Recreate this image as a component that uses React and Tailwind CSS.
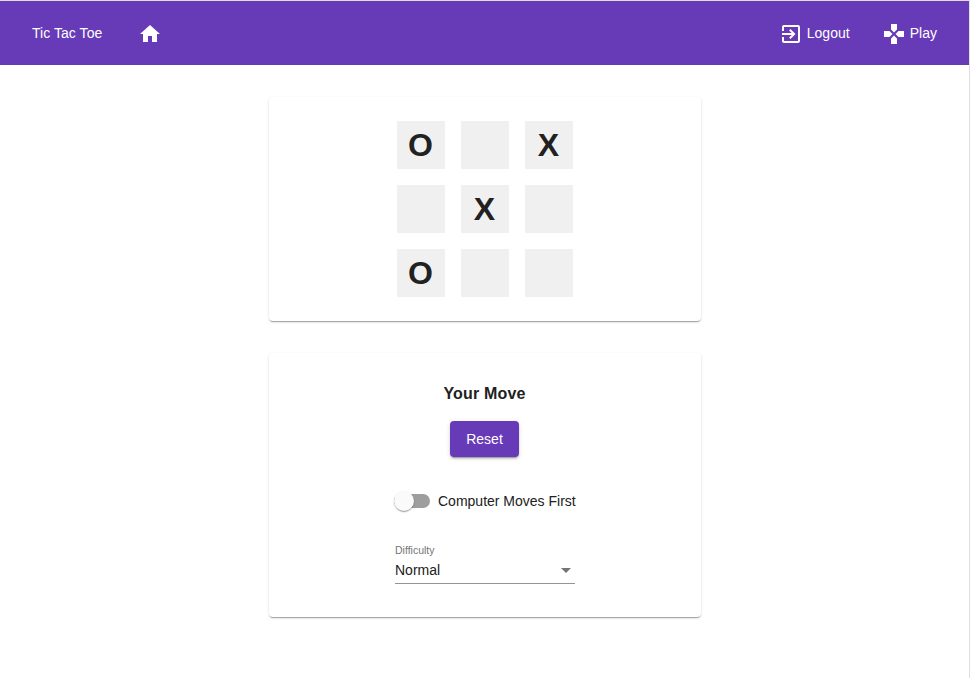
import React from "react";

const CELLS = ["O", "", "X", "", "X", "", "O", "", ""];

const HOME = "M10 20v-6h4v6h5v-8h3L12 3 2 12h3v8z";
const EXIT =
  "M10.09 15.59L11.5 17l5-5-5-5-1.41 1.41L12.67 11H3v2h9.67l-2.58 2.59zM19 3H5c-1.11 0-2 .9-2 2v4h2V5h14v14H5v-4H3v4c0 1.1.89 2 2 2h14c1.1 0 2-.9 2-2V5c0-1.1-.9-2-2-2z";
const GAMEPAD =
  "M15 7.5V2H9v5.5l3 3 3-3zM7.5 9H2v6h5.5l3-3-3-3zM9 16.5V22h6v-5.5l-3-3-3 3zM16.5 9l-3 3 3 3H22V9h-5.5z";

function Icon({ path }) {
  return (
    <svg viewBox="0 0 24 24" className="mt-0.5 size-6 shrink-0 fill-white">
      <path d={path} />
    </svg>
  );
}

function Card({ className, children }) {
  return (
    <section
      className={`flex w-[432px] flex-col items-center rounded bg-white shadow-[0_2px_1px_-1px_rgba(0,0,0,0.2),0_1px_1px_0_rgba(0,0,0,0.14),0_1px_3px_0_rgba(0,0,0,0.12)] ${className}`}
    >
      {children}
    </section>
  );
}

export default function App() {
  return (
    <div className="h-[678px] w-[970px] overflow-hidden border-t border-r border-[#dedde1] bg-white font-['Liberation_Sans',Arial,sans-serif] text-sm text-[#212121]">
      <header className="flex h-16 items-center bg-[#673ab7] pr-8 pl-8 text-white">
        <span className="w-[106px] tracking-[0.05px]">Tic Tac Toe</span>
        <Icon path={HOME} />
        <nav className="ml-auto flex items-center gap-8">
          <a className="flex items-center gap-1">
            <Icon path={EXIT} />
            <span className="tracking-[0.05px]">Logout</span>
          </a>
          <a className="flex items-center gap-1">
            <Icon path={GAMEPAD} />
            <span>Play</span>
          </a>
        </nav>
      </header>

      <main className="flex flex-col items-center gap-8 pt-8 pl-px">
        <Card className="h-[224px] pt-6">
          <div className="grid grid-cols-3 gap-4">
            {CELLS.map((mark, i) => (
              <div
                key={i}
                className="flex size-12 items-center justify-center bg-[#f0f0f0] pr-px text-[32px] leading-none font-bold"
              >
                {mark}
              </div>
            ))}
          </div>
        </Card>

        <Card className="h-[264px] pt-[29px]">
          <h3 className="pr-px text-base leading-6 font-bold tracking-[0.16px]">Your Move</h3>
          <button className="mt-[15px] mr-px h-9 w-[69px] rounded bg-[#673ab7] text-white shadow-[0_3px_1px_-2px_rgba(0,0,0,0.2),0_2px_2px_0_rgba(0,0,0,0.14),0_1px_5px_0_rgba(0,0,0,0.12)]">
            Reset
          </button>
          <label className="mt-8 mr-px flex h-6 w-[181px] items-center gap-2 whitespace-nowrap">
            <span className="flex h-3.5 w-9 shrink-0 items-center rounded-lg bg-[#9e9e9e]">
              <span className="size-5 shrink-0 rounded-full bg-[#fafafa] shadow-[0_2px_1px_-1px_rgba(0,0,0,0.2),0_1px_1px_0_rgba(0,0,0,0.14),0_1px_3px_0_rgba(0,0,0,0.12)]" />
            </span>
            <span>Computer Moves First</span>
          </label>
          <div className="mt-[30px] w-[180px] border-b border-[#949494] pb-[5px]">
            <div className="text-[10.5px] leading-[14px] text-[#757575]">Difficulty</div>
            <div className="mt-[5px] flex h-4 items-center justify-between pr-1">
              <span>Normal</span>
              <svg viewBox="0 0 10 5" className="h-[5px] w-2.5 fill-[#757575]">
                <path d="M0 0h10L5 5z" />
              </svg>
            </div>
          </div>
        </Card>
      </main>
    </div>
  );
}
